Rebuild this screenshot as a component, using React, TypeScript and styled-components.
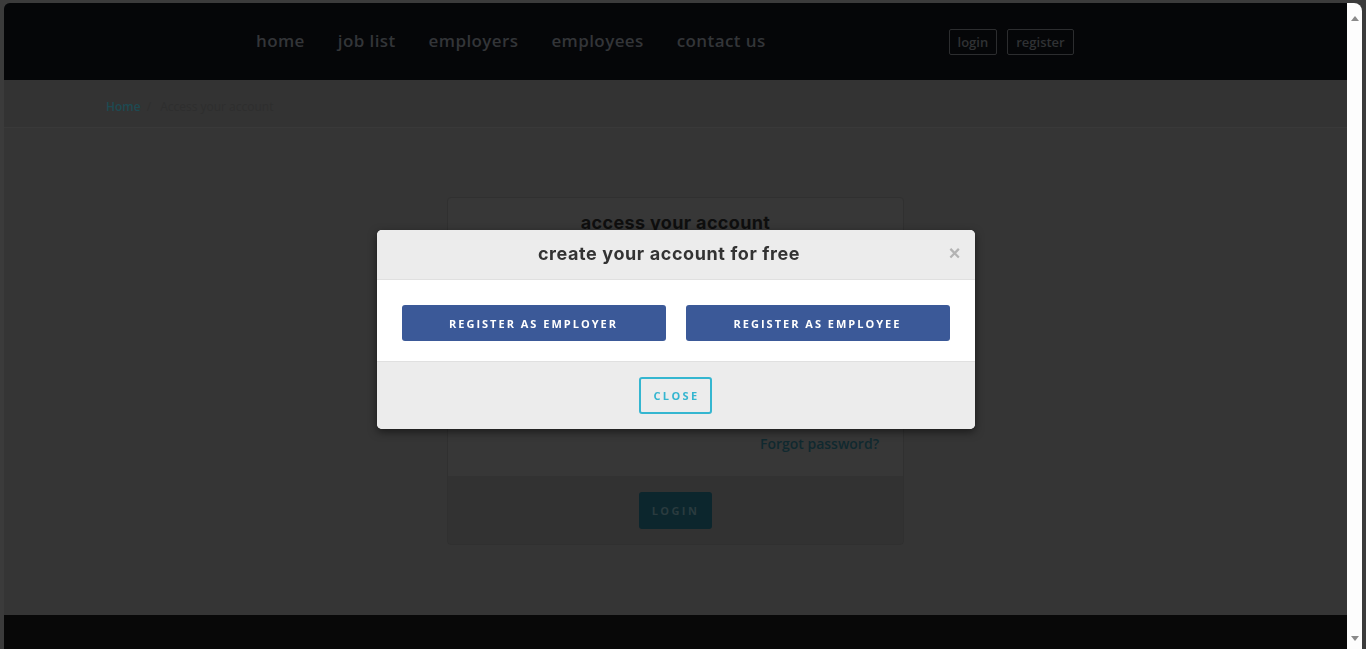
import React from 'react';
import styled, { createGlobalStyle } from 'styled-components';

const GlobalStyle = createGlobalStyle`
  html, body {
    margin: 0;
    padding: 0;
    height: 100%;
    overflow: hidden;
    background: #3b3b3b;
    font-family: 'Open Sans', 'Liberation Sans', sans-serif;
  }
  * {
    box-sizing: border-box;
  }
`;

const Frame = styled.div`
  display: flex;
  height: 100vh;
  padding: 3px 4px 0 4px;
`;

const Page = styled.div`
  flex: 1;
  display: flex;
  flex-direction: column;
  overflow: hidden;
  border-top-left-radius: 6px;
  background: #353535;
`;

const Header = styled.header`
  height: 77px;
  flex-shrink: 0;
  background: #050608;
  display: flex;
  align-items: center;
  padding-left: 252px;
`;

const Nav = styled.nav`
  display: flex;
  gap: 33px;
`;

const NavLink = styled.a`
  font-size: 17px;
  font-weight: 600;
  letter-spacing: 0.4px;
  color: #333538;
  text-decoration: none;
  padding-bottom: 2px;
`;

const Auth = styled.div`
  display: flex;
  gap: 10px;
  margin-left: 183px;
`;

const AuthButton = styled.a`
  height: 26px;
  padding: 0 8px;
  display: flex;
  align-items: center;
  border: 1px solid #2c2d2f;
  border-radius: 2px;
  font-size: 13px;
  font-weight: 600;
  color: #303234;
`;

const Breadcrumb = styled.div`
  height: 48px;
  flex-shrink: 0;
  display: flex;
  align-items: center;
  padding: 5px 0 0 102px;
  background: #333333;
  border-bottom: 1px solid #393939;
  font-size: 12px;
`;

const Crumb = styled.span<{ $link?: boolean }>`
  color: ${(p) => (p.$link ? '#1d4a52' : '#2e2e2e')};
  font-weight: ${(p) => (p.$link ? 600 : 400)};
`;

const Sep = styled.span`
  margin: 0 9px 0 6px;
  color: #2e2e2e;
`;

const Main = styled.main`
  height: 487px;
  flex-shrink: 0;
  display: flex;
  justify-content: center;
  padding-top: 69px;
`;

const Card = styled.section`
  width: 457px;
  height: 348px;
  display: flex;
  flex-direction: column;
  background: #373737;
  border: 1px solid #303030;
  border-radius: 4px;
  overflow: hidden;
`;

const CardBody = styled.div`
  flex: 1;
  display: flex;
  flex-direction: column;
  padding: 14px 24px 0;
`;

const CardTitle = styled.h2`
  margin: 0;
  text-align: center;
  font-family: 'Inter', 'Open Sans', sans-serif;
  font-size: 18px;
  font-weight: 700;
  letter-spacing: 0.35px;
  color: #0e0e0e;
`;

const Forgot = styled.a`
  margin-top: auto;
  margin-bottom: 23px;
  align-self: flex-end;
  font-size: 14px;
  font-weight: 600;
  color: #10292f;
`;

const CardFooter = styled.div`
  height: 68px;
  display: flex;
  justify-content: center;
  align-items: flex-start;
  padding-top: 16px;
  background: #323232;
`;

const LoginButton = styled.button`
  width: 73px;
  height: 37px;
  border: none;
  border-radius: 3px;
  background: #0c262d;
  color: #2a3b3f;
  font-family: inherit;
  font-size: 11px;
  font-weight: 700;
  letter-spacing: 2.4px;
`;

const Footer = styled.footer`
  height: 200px;
  flex-shrink: 0;
  background: #080808;
`;

const Scrollbar = styled.div`
  width: 15px;
  flex-shrink: 0;
  background: #fdfdfd;
  border-top-right-radius: 8px;
  display: flex;
  flex-direction: column;
  justify-content: space-between;
  align-items: center;
  padding: 13px 0 8px;
`;

const Arrow = styled.span<{ $down?: boolean }>`
  width: 0;
  height: 0;
  border-left: 4px solid transparent;
  border-right: 4px solid transparent;
  ${(p) =>
    p.$down ? 'border-top: 5px solid #8a8a8a;' : 'border-bottom: 5px solid #8a8a8a;'}
`;

const ModalLayer = styled.div`
  position: fixed;
  top: 3px;
  left: 4px;
  right: 19px;
  bottom: 0;
  display: flex;
  justify-content: center;
  align-items: flex-start;
  padding-top: 227px;
`;

const Modal = styled.div`
  width: 598px;
  background: #fff;
  border-radius: 5px;
  overflow: hidden;
  box-shadow: 0 3px 9px rgba(0, 0, 0, 0.5);
`;

const ModalHeader = styled.div`
  position: relative;
  height: 50px;
  display: flex;
  align-items: center;
  justify-content: center;
  background: #ececec;
  border-bottom: 1px solid #e0e0e0;
`;

const ModalTitle = styled.h3`
  margin: 0 13px 2px 0;
  font-family: 'Inter', 'Open Sans', sans-serif;
  font-size: 18px;
  font-weight: 700;
  letter-spacing: 0.6px;
  color: #333;
`;

const CloseX = styled.button`
  position: absolute;
  right: 14px;
  top: 13px;
  border: none;
  background: none;
  padding: 0;
  font-family: 'Liberation Sans', sans-serif;
  font-size: 20px;
  line-height: 20px;
  font-weight: 700;
  color: #b3b3b3;
`;

const ModalBody = styled.div`
  display: grid;
  grid-template-columns: 1fr 1fr;
  gap: 20px;
  padding: 25px 25px 20px;
`;

const PrimaryButton = styled.button`
  height: 36px;
  border: none;
  border-radius: 3px;
  background: #3b5998;
  color: #fff;
  font-family: inherit;
  font-size: 11px;
  font-weight: 700;
  letter-spacing: 2px;
`;

const ModalFooter = styled.div`
  display: flex;
  justify-content: center;
  padding: 15px 0;
  background: #ececec;
  border-top: 1px solid #e0e0e0;
`;

const OutlineButton = styled.button`
  width: 73px;
  height: 37px;
  border: 2px solid #35b6d0;
  border-radius: 3px;
  background: transparent;
  color: #35b6d0;
  font-family: inherit;
  font-size: 11px;
  font-weight: 700;
  letter-spacing: 2.4px;
  padding: 0 0 0 2px;
`;

const navItems = ['home', 'job list', 'employers', 'employees', 'contact us'];

const App = () => {
  return (
    <>
      <GlobalStyle />
      <Frame>
        <Page>
          <Header>
            <Nav>
              {navItems.map((item) => (
                <NavLink key={item}>{item}</NavLink>
              ))}
            </Nav>
            <Auth>
              <AuthButton>login</AuthButton>
              <AuthButton>register</AuthButton>
            </Auth>
          </Header>
          <Breadcrumb>
            <Crumb $link>Home</Crumb>
            <Sep>/</Sep>
            <Crumb>Access your account</Crumb>
          </Breadcrumb>
          <Main>
            <Card>
              <CardBody>
                <CardTitle>access your account</CardTitle>
                <Forgot>Forgot password?</Forgot>
              </CardBody>
              <CardFooter>
                <LoginButton>LOGIN</LoginButton>
              </CardFooter>
            </Card>
          </Main>
          <Footer />
        </Page>
        <Scrollbar>
          <Arrow />
          <Arrow $down />
        </Scrollbar>
      </Frame>
      <ModalLayer>
        <Modal>
          <ModalHeader>
            <ModalTitle>create your account for free</ModalTitle>
            <CloseX>×</CloseX>
          </ModalHeader>
          <ModalBody>
            <PrimaryButton>REGISTER AS EMPLOYER</PrimaryButton>
            <PrimaryButton>REGISTER AS EMPLOYEE</PrimaryButton>
          </ModalBody>
          <ModalFooter>
            <OutlineButton>CLOSE</OutlineButton>
          </ModalFooter>
        </Modal>
      </ModalLayer>
    </>
  );
};

export default App;
